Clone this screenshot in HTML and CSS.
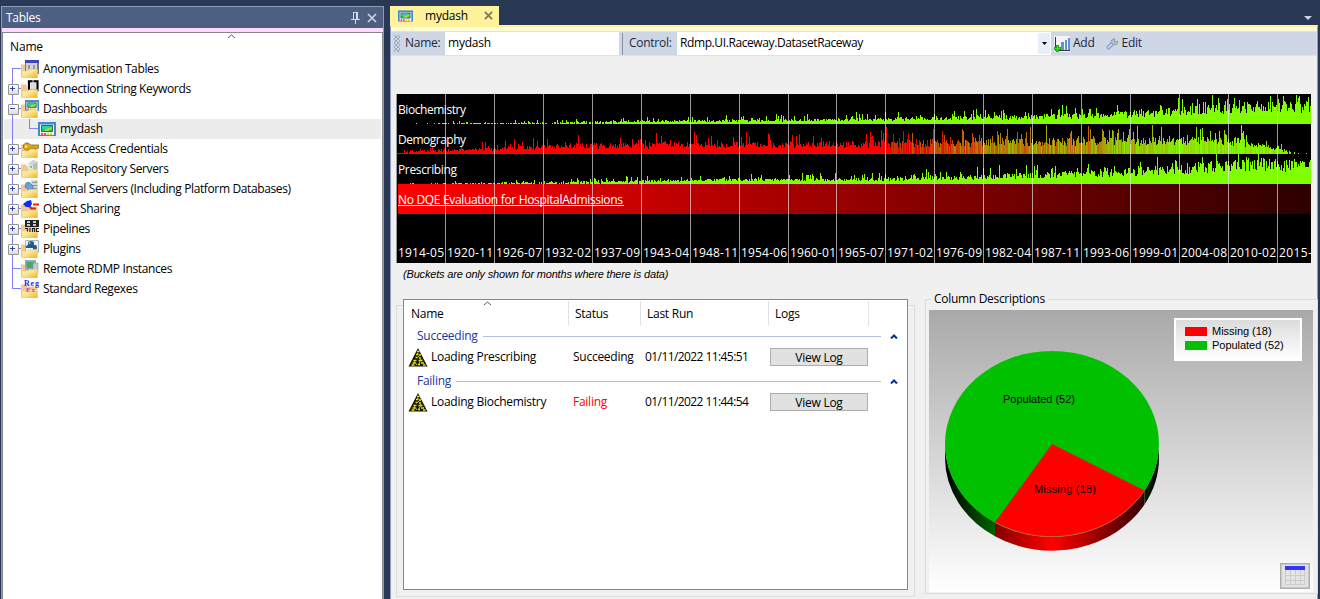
FILE: index.html
```
<!DOCTYPE html>
<html lang="en">
<head>
<meta charset="utf-8">
<title>mydash</title>
<link rel="stylesheet" href="styles.css">
</head>
<body>
<svg class="defs" width="0" height="0">
  <defs>
    <linearGradient id="gold" x1="0" y1="0" x2="1" y2="1"><stop offset="0" stop-color="#fff3bd"/><stop offset=".45" stop-color="#fde290"/><stop offset="1" stop-color="#ecb41c"/></linearGradient>
    <symbol id="back" viewBox="0 0 18 18"><path d="M0 4.500h5l1 2h10v11H0z" fill="#f0c890"/></symbol>
    <symbol id="front" viewBox="0 0 18 18"><path d="M1 18V11h5.500l2-1.500H16.500V18z" fill="url(#gold)" stroke="#f0c868" stroke-width=".5"/></symbol>
    <symbol id="screen" viewBox="0 0 18 14"><path d="M0 0h18v14H0z" fill="#4488cc"/><path d="M2 2.500h14V13H2z" fill="#eef5fb"/><path d="M3.500 3.500h11v6h-11z" fill="#1fc433" stroke="#4d5a66"/><path d="M4 4h9L9 7H4z" fill="#2ad3a6"/><path d="M5 9l5-3 4-1v2l-4 2z" fill="#8ee43c"/><path d="M3 11h2v2H3zM6 11h2v2H6z" fill="#f44"/><path d="M9 11h2v2H9zM12 11h2v2h-2z" fill="#f6c326"/></symbol>
    <symbol id="hazard" viewBox="0 0 20 20"><path d="M10 1L19.500 19.500H.5z" fill="#171708"/><path d="M9 4.500h2.500M8 7.500h2M11 8h2M7.500 10.500h2M11 11h2M5.500 13.500h3M10.500 13.500h4M4.500 16h3M13 16h3M3.500 18h3M10 17.500h2M15 18h2.500" stroke="#efe313" stroke-width="1.500"/><path d="M9 6l3 2-3 3M6 14l3 4M13 12l-2 5" stroke="#d2c81a" fill="none"/></symbol>
    <symbol id="server" viewBox="0 0 14 14"><path d="M3 4l5-4 5 2v8l-5 4-5-2z" fill="#b8bab9"/><path d="M3 4l5 1v9l-5-2z" fill="#e8e9e8"/><path d="M3 4l5-4 5 2-5 3z" fill="#d6d7d5"/><path d="M5 7l2 .5" stroke="#43bd4a" stroke-width="1.500"/></symbol>
  </defs>
</svg>
<div class="app">
  <aside class="dock">
    <header class="dock-title"><span>Tables</span>
      <svg class="pin" width="9" height="12" viewBox="0 0 9 12"><path d="M2.500 0v7M2 .5h4M5.500 0v7M6.500 0v7M0 7.500h9M4.500 8v4" fill="none" stroke="#d5dae6"/></svg>
      <svg class="close" width="10" height="10" viewBox="0 0 10 10"><path d="M1 1l8 8M9 1L1 9" stroke="#ced4e3" stroke-width="1.700"/></svg>
    </header>
    <div class="tree-box">
      <svg class="sort" width="9" height="5" viewBox="0 0 9 5"><path d="M1 4l3.500-3L8 4" fill="none" stroke="#555"/></svg>
      <div class="tree-head">Name</div>
      <ul class="tree">
        <li class="leaf first"><i class="joint"></i><svg class="ico" viewBox="0 0 18 18"><use href="#back"/><path d="M4 0h14v14H4z" fill="#77787c"/><path d="M4 0h14v3H4z" fill="#3b46c4"/><path d="M5 3h11v8H5z" fill="#d4d4d6"/><path d="M7 5h2v4H7zM12 5h2v4h-2z" fill="#98989c"/><use href="#front"/></svg><span>Anonymisation Tables</span></li>
        <li><i class="joint plus"></i><svg class="ico" viewBox="0 0 18 18"><use href="#back"/><path d="M6 0h12v11H6z" fill="#ddd"/><path d="M11.500 1.200H8v9h3.500M12.500 1.200H16.500v9h-4" fill="none" stroke="#000" stroke-width="2"/><use href="#front"/></svg><span>Connection String Keywords</span></li>
        <li><i class="joint minus"></i><svg class="ico" viewBox="0 0 18 18"><use href="#back"/><use href="#screen" x="4" y="0" width="14" height="11"/><use href="#front"/></svg><span>Dashboards</span></li>
        <li class="child"><i class="joint"></i><svg class="ico wide" viewBox="0 0 18 14"><use href="#screen" width="18" height="14"/></svg><span>mydash</span></li>
        <li><i class="joint plus"></i><svg class="ico" viewBox="0 0 18 18"><use href="#back"/><use href="#front"/><path d="M2.500 5l2-2h3l2 2H18v2.500l-1.500 1.500-1-1-1.500 1-1.500-1H9.500l-2 2h-3l-2-2z" fill="#dba914" stroke="#8a6606" stroke-width=".8"/><path d="M4 5.500h2v2H4z" fill="#fff1b0"/></svg><span>Data Access Credentials</span></li>
        <li><i class="joint plus"></i><svg class="ico" viewBox="0 0 18 18"><use href="#back"/><use href="#server" x="4" y="0" width="14" height="13"/><use href="#front"/></svg><span>Data Repository Servers</span></li>
        <li><i class="joint plus"></i><svg class="ico" viewBox="0 0 18 18"><use href="#back"/><path d="M10 0h7v11h-7z" fill="#d5d7d8"/><path d="M11 2.500h5M11 5.500h5M11 8.500h5" stroke="#8f9496"/><path d="M15 1v2" stroke="#43bd4a"/><path d="M5 3l3-1 4 4v4H8L4 7z" fill="#6a9fd8" stroke="#4376ad" stroke-width=".7"/><use href="#front"/></svg><span>External Servers (Including Platform Databases)</span></li>
        <li><i class="joint plus"></i><svg class="ico" viewBox="0 0 18 18"><use href="#back"/><use href="#front"/><path d="M12 4.500h6M9 8.500h6M8 6l3 3" stroke="#f51d0c" stroke-width="2.200"/><path d="M2 4l4-3 4-1 1 4-2 3-4 0z" fill="#0c2fef"/></svg><span>Object Sharing</span></li>
        <li><i class="joint plus"></i><svg class="ico" viewBox="0 0 18 18"><use href="#back"/><use href="#front"/><path d="M4 0h14v7H4z" fill="#222"/><path d="M6 1h3v5H6zM12 1h3v5h-3z" fill="#ccc"/><path d="M6 3.500h3M12 3.500h3" stroke="#222"/><path d="M4 8.500h2.500v3M9 8v4M11.500 12V8.500h2V12M18 8.500h-2.500v3H18" fill="none" stroke="#252525" stroke-width="1.200"/></svg><span>Pipelines</span></li>
        <li><i class="joint plus"></i><svg class="ico" viewBox="0 0 18 18"><use href="#back"/><path d="M4.500.5h13v12h-13z" fill="#eef3f6" stroke="#a5b8c4"/><path d="M7 5V3q0-2 3-2t3 2v2h2q2 2 0 6h-3V8H5q-1-2 2-3z" fill="#245c86"/><path d="M8 3h1.500" stroke="#fff"/><use href="#front"/></svg><span>Plugins</span></li>
        <li class="leaf"><i class="joint"></i><svg class="ico" viewBox="0 0 18 18"><use href="#back"/><path d="M4 0h11v10H4z" fill="#86aed4"/><path d="M5.500 2h8v6h-8z" fill="#4fa65c"/><path d="M12 3h5v10h-5z" fill="#c3c8ca" stroke="#8f979a" stroke-width=".6"/><use href="#front"/></svg><span>Remote RDMP Instances</span></li>
        <li class="leaf last"><i class="joint"></i><svg class="ico" viewBox="0 0 18 18"><use href="#back"/><use href="#front"/><text x="3" y="6" class="reg" textLength="15">Reg</text><text x="5" y="12" class="reg ex" textLength="9">Ex</text></svg><span>Standard Regexes</span></li>
      </ul>
    </div>
  </aside>

  <main class="doc">
    <div class="tabs">
      <div class="tab"><svg width="15" height="12" viewBox="0 0 18 14"><use href="#screen" width="18" height="14"/></svg><span>mydash</span>
        <svg class="tab-x" width="9" height="9" viewBox="0 0 10 10"><path d="M1 1l8 8M9 1L1 9" stroke="#82754b" stroke-width="1.900"/></svg></div>
      <svg class="tab-menu" width="8" height="4" viewBox="0 0 8 4"><path d="M0 0h8L4 4z" fill="#ced4e3"/></svg>
    </div>
    <div class="page">
      <div class="strip">
        <i class="grip"></i><label class="l-name">Name:</label><div class="box name">mydash</div>
        <i class="sep"></i><label class="l-ctl">Control:</label>
        <div class="box combo"><span>Rdmp.UI.Raceway.DatasetRaceway</span><i class="drop"><svg width="5" height="3" viewBox="0 0 5 3"><path d="M0 0h5L2.500 3z"/></svg></i></div>
        <svg class="s-ico" width="16" height="16" viewBox="0 0 16 16"><path d="M0 0h16v16H0z" fill="#f3f5fa"/><path d="M1.500 1v13.500H16" fill="none" stroke="#333"/><path d="M7 6h3v8H7zM11 4h2v10h-2zM14 2h2v12h-2z" fill="#5d95cc"/><path d="M3.500 9v7M0 12.500h7" stroke="#1fae13" stroke-width="3"/><path d="M3.500 10v5M1 12.500h5" stroke="#37e82b"/></svg><span class="s-txt">Add</span>
        <svg class="s-ico edit" width="12" height="12" viewBox="0 0 12 12"><path d="M2.500 9.500L6 6" stroke="#7b9ddc" stroke-width="4" stroke-linecap="round"/><path d="M2.500 9.500l3-3" stroke="#bed0f4" stroke-width="2" stroke-linecap="round"/><path d="M5.500 5a2.800 2.800 0 0 1 3.500-4L8 3l1 1 2.500-1a2.800 2.800 0 0 1-4 3.500z" fill="#b9bcc2" stroke="#8d929c" stroke-width=".8"/></svg><span class="s-txt">Edit</span>
      </div>
      <section class="race">
        <svg id="raceway" width="915" height="169" viewBox="0 0 915 169">
          <defs><linearGradient id="fade"><stop offset="0" stop-color="#f00"/><stop offset="1" stop-color="#2d0000"/></linearGradient></defs>
          <rect width="915" height="169"/><rect x="2" y="90" width="913" height="30" fill="url(#fade)"/>
          <g id="bars" shape-rendering="crispEdges"></g><g id="grid"></g>
          <g class="race-label">
            <text x="2" y="20" textLength="68">Biochemistry</text><text x="2" y="50" textLength="68">Demography</text><text x="2" y="80" textLength="59">Prescribing</text>
            <text x="2" y="110" textLength="225">No DQE Evaluation for HospitalAdmissions</text><path d="M2 111.500h226" stroke="#fff"/>
          </g>
        </svg>
        <p class="note">(Buckets are only shown for months where there is data)</p>
      </section>
      <div class="lower">
        <section class="loads"><div class="load-list">
          <div class="lhead"><svg class="lsort" width="9" height="5" viewBox="0 0 9 5"><path d="M1 4l3.500-3L8 4" fill="none" stroke="#555"/></svg><span>Name</span><span>Status</span><span>Last Run</span><span>Logs</span></div>
          <div class="group"><span>Succeeding</span><hr><svg width="8" height="5" viewBox="0 0 8 5"><path d="M1 4.500L4 1.500l3 3" fill="none" stroke="#003399" stroke-width="2"/></svg></div>
          <div class="lrow"><svg class="hz" width="20" height="20"><use href="#hazard"/></svg><span class="n">Loading Prescribing</span><span class="st">Succeeding</span><span class="dt">01/11/2022 11:45:51</span><button>View Log</button></div>
          <div class="group"><span>Failing</span><hr><svg width="8" height="5" viewBox="0 0 8 5"><path d="M1 4.500L4 1.500l3 3" fill="none" stroke="#003399" stroke-width="2"/></svg></div>
          <div class="lrow"><svg class="hz" width="20" height="20"><use href="#hazard"/></svg><span class="n">Loading Biochemistry</span><span class="st fail">Failing</span><span class="dt">01/11/2022 11:44:54</span><button>View Log</button></div>
        </div></section>
        <section class="cols">
          <h2>Column Descriptions</h2>
          <div class="plot">
            <svg class="pie" width="240" height="282" viewBox="0 0 240 282">
              <defs>
                <linearGradient id="sideR" gradientUnits="userSpaceOnUse" x1="16" x2="230"><stop offset="0" stop-color="#000"/><stop offset=".23" stop-color="#800000"/><stop offset=".5" stop-color="#f00"/><stop offset=".92" stop-color="#380000"/><stop offset="1" stop-color="#000"/></linearGradient>
                <linearGradient id="sideG" gradientUnits="userSpaceOnUse" x1="16" x2="230"><stop offset="0" stop-color="#000"/><stop offset=".23" stop-color="#006200"/><stop offset=".5" stop-color="#00c000"/><stop offset=".92" stop-color="#002800"/><stop offset="1" stop-color="#000"/></linearGradient>
              </defs>
              <path d="M16 134A107 93 0 0 0 66 212.300V226.300A107 93 0 0 1 16 148z" fill="url(#sideG)"/>
              <path d="M230 134A107 93 0 0 1 215.500 180.500V194.500A107 93 0 0 0 230 148z" fill="url(#sideG)"/>
              <path d="M66 212.300A107 93 0 0 0 215.500 180.500V194.500A107 93 0 0 1 66 226.300z" fill="url(#sideR)"/>
              <ellipse cx="123" cy="134" rx="107" ry="93" fill="#00c000"/>
              <path d="M123 134L66 212.300A107 93 0 0 0 215.500 180.500z" fill="#f00"/>
              <path d="M66 212.300A107 93 0 0 0 215.500 180.500" fill="none" stroke="#f66" stroke-width=".5"/>
              <text x="74" y="93" textLength="72">Populated (52)</text><text x="105" y="183" textLength="62">Missing (18)</text>
            </svg>
            <div class="legend"><div><i class="red"></i><span>Missing (18)</span></div><div><i class="green"></i><span>Populated (52)</span></div></div>
            <button class="grid-btn"><svg width="20" height="20" viewBox="0 0 20 20"><path d="M0 4h20v15H0z" fill="#e4e4e4"/><path d="M.5 4v15M5.500 4v15M10.500 4v15M15.500 4v15M19.500 4v15M0 9.500h20M0 14.500h20M0 18.500h20" stroke="#ccc"/><path d="M0 0h20v4H0z" fill="#3434f0"/></svg></button>
          </div>
        </section>
      </div>
    </div>
  </main>
</div>
<script src="raceway.js"></script>
</body>
</html>
```
FILE: styles.css
```
* { box-sizing: border-box; }
body { margin: 0; width: 1320px; height: 599px; overflow: hidden; background: #293955; color: #000; font: 12px/20px "Open Sans", "Noto Sans", sans-serif; letter-spacing: -.26px; }
span, label, text { white-space: nowrap; }
.defs { position: absolute; }
.app { display: flex; height: 599px; padding: 6px 2px 0 1px; gap: 6px; }
.dock { width: 383px; border: 1px solid #8e9bbc; border-bottom: 0; background: #ffd9fa; display: flex; flex-direction: column; }
.dock-title { display: flex; align-items: center; height: 21px; background: #4d6082; color: #fff; padding: 0 6px 0 4px; }
.dock-title span { flex: 1; padding-top: 1px; }
.pin { margin-right: 7px; }
.tree-box { margin-top: 4px; flex: 1; background: #fff; border: 1px solid #828790; border-width: 1px 1px 0; padding-top: 2px; position: relative; }
.sort { position: absolute; left: 224px; top: 1px; }
.tree-head { height: 24px; padding: 2px 0 0 7px; letter-spacing: -.15px; }
.tree { list-style: none; margin: 0 1px; padding: 0; letter-spacing: -.37px; }
.tree li { position: relative; display: flex; height: 20px; align-items: center; }
.tree li::before { content: ""; position: absolute; left: 8px; top: 0; bottom: 0; width: 1px; background: #8080ff; }
.tree li.first::before { top: 9px; }
.tree li.last::before { bottom: 10px; }
.joint { width: 17px; height: 20px; flex: none; position: relative; background: linear-gradient(#8080ff, #8080ff) 8px 9px / 9px 1px no-repeat; }
.plus::before, .minus::before { content: ""; position: absolute; left: 4px; top: 5px; width: 9px; height: 9px; border: 1px solid #919191; border-radius: 1px; background: linear-gradient(#3445a0, #3445a0) 1px 3px / 5px 1px no-repeat, linear-gradient(#fff, #ddd); }
.plus::before { background: linear-gradient(#3445a0, #3445a0) 1px 3px / 5px 1px no-repeat, linear-gradient(#3445a0, #3445a0) 3px 1px / 1px 5px no-repeat, linear-gradient(#fff, #ddd); }
.ico { width: 18px; height: 18px; flex: none; margin-right: 4px; }
.ico.wide { height: 14px; }
.tree .child { background: #ececec; letter-spacing: -.2px; }
.child .joint { width: 34px; background: linear-gradient(#8080ff, #8080ff) 25px 9px / 9px 1px no-repeat, linear-gradient(#8080ff, #8080ff) 25px 0 / 1px 9px no-repeat; }
.reg { font: bold 8px "Liberation Serif", serif; fill: #3522ee; letter-spacing: 0; }
.reg.ex { fill: #f012d8; font-size: 7px; }
.doc { width: 928px; display: flex; flex-direction: column; }
.tabs { height: 19px; display: flex; justify-content: space-between; }
.tab { width: 109px; background: #fff29d; display: flex; align-items: center; padding: 0 6px 0 8px; letter-spacing: -.2px; }
.tab span { margin-left: 12px; flex: 1; padding-top: 1px; }
.tab-menu { margin: 10px 6px 0 0; }
.page { flex: 1; background: #f0f0f0; border-top: 2px solid #fff29d; border-right: 1px solid #8e9bbc; border-left: 1px solid #8e9bbc; box-shadow: inset 0 4px #fffbd5; padding-top: 4px; display: flex; flex-direction: column; }
.strip { height: 25px; border: 1px solid #dce1ec; background: #cfd6e5; display: flex; align-items: center; color: #1b293e; }
.grip { width: 6px; height: 17px; margin: 0 5px 0 2px; background: radial-gradient(circle, #8390a8 .6px, transparent .9px) 0 0 / 4px 4px, radial-gradient(circle, #8390a8 .6px, transparent .9px) 2px 2px / 4px 4px; }
.l-name { width: 40px; }
.box { background: #fff; color: #000; height: 23px; line-height: 22px; padding-left: 3px; letter-spacing: -.2px; }
.box.name { width: 174px; }
.sep { width: 1px; height: 22px; background: #8591a8; margin: 0 6px 0 3px; }
.l-ctl { width: 48px; }
.combo { width: 374px; display: flex; justify-content: space-between; letter-spacing: -.4px; }
.drop { width: 12px; background: #e7eefc; display: flex; align-items: center; justify-content: center; margin: 1px; }
.s-ico { margin-left: 3px; }
.s-txt { margin-left: 3px; }
.strip label, .s-txt { padding-bottom: 1px; }
.s-ico.edit { margin-left: 11px; }
.s-ico.edit + .s-txt { margin-left: 4px; }
.race { padding: 38px 0 0 5px; height: 241px; }
.race svg { display: block; }
.race-label text { fill: #fff; font-size: 12px; letter-spacing: 0; }
.axis { fill: #fff; font-size: 12px; letter-spacing: 0; }
.note { margin: 1px 0 0 7px; font: italic 11px/20px "Liberation Sans", Arial, sans-serif; letter-spacing: -.18px; }
.lower { flex: 1; display: flex; align-items: flex-start; padding-left: 5px; }
.loads { width: 520px; height: 292px; margin-top: 8px; border: 1px solid #dcdcdc; padding: 0 6px; }
.load-list { width: 505px; height: 291px; margin-top: -7px; background: #fff; border: 1px solid #828790; }
.lhead { display: grid; grid-template-columns: 165px 72px 128px 100px; height: 25px; position: relative; margin-top: 1px; }
.lhead span { border-right: 1px solid #e2e2e2; padding: 3px 0 0 6px; }
.lhead span:nth-of-type(1) { padding-left: 7px; }
.lsort { position: absolute; left: 79px; top: 0; }
.group { display: flex; align-items: center; height: 20px; padding: 0 9px 0 13px; color: #1937a0; }
.group hr { flex: 1; border: 0; border-top: 1px solid #b0c0df; margin: 0 9px 0 5px; }
.group span { padding-bottom: 1px; }
.lrow { height: 25px; display: grid; grid-template-columns: 27px 142px 72px 125px 98px; align-items: center; padding-bottom: 3px; }
.hz { margin-left: 4px; }
.fail { color: #f00; }
.dt { letter-spacing: -.58px; }
button { font: inherit; letter-spacing: inherit; color: #000; background: #e1e1e1; border: 1px solid #adadad; padding: 0; height: 18px; line-height: 18px; overflow: hidden; }
.cols { width: 393px; height: 295px; margin: 2px 0 0 10px; border: 1px solid #dcdcdc; padding: 0 3px; flex: none; }
.cols h2 { font: inherit; line-height: 20px; margin: -11px 0 0 2px; padding: 0 3px; width: 117px; background: #f0f0f0; white-space: nowrap; letter-spacing: -.3px; }
.plot { width: 384px; height: 282px; margin-top: 1px; background: linear-gradient(#a9a9a9, #fff); display: flex; position: relative; }
.pie text { font: 11px "Liberation Sans", Arial, sans-serif; letter-spacing: 0; }
.legend { width: 128px; height: 43px; margin: 8px 0 0 5px; border: 2px solid #fff; background: linear-gradient(#dcdcdc, #fff); padding: 4px 9px; font: 11px/14px "Liberation Sans", Arial, sans-serif; letter-spacing: -.03px; }
.legend div { display: flex; align-items: center; gap: 5px; height: 14px; }
.legend i { width: 22px; height: 9px; }
.red { background: #f00; }
.green { background: #00c000; }
.grid-btn { position: absolute; right: 3px; bottom: 3px; width: 30px; height: 26px; display: flex; align-items: center; justify-content: center; box-shadow: inset 0 0 0 1px #c8c8c8; }
```
FILE: raceway.js
```
(function () {
  var NS = "http://www.w3.org/2000/svg";
  var seed = 20221101;
  function rnd() { seed = (seed * 1664525 + 1013904223) % 4294967296; return seed / 4294967296; }
  // Typical bar height along the timeline, as [x, height] control points
  var health = [[0, 0], [30, .3], [60, .7], [150, 1.5], [240, 3], [330, 3.5], [450, 4.5], [540, 6], [620, 7], [720, 9.5], [800, 14], [850, 18], [880, 20], [914, 18]];
  var scripts = [[0, 0], [25, .2], [80, .9], [150, 1.8], [250, 3], [330, 4], [480, 4.5], [600, 7.5], [700, 11], [780, 15], [850, 21], [914, 19]];
  var people = [[0, .6], [12, 2.5], [60, 4], [100, 5], [160, 8], [300, 9.5], [480, 10], [600, 12], [720, 13.5], [840, 13], [872, 7], [888, 3.5], [904, .6], [914, 0]];
  function level(p, x) {
    for (var i = 1; i < p.length; i++) if (x <= p[i][0]) {
      return p[i - 1][1] + (p[i][1] - p[i - 1][1]) * (x - p[i - 1][0]) / (p[i][0] - p[i - 1][0]);
    }
    return 0;
  }
  // Completeness of the month: red where empty, through orange, to lime
  var complete = [[495, 0], [520, .15], [570, .4], [610, .55], [680, .55], [740, .8], [790, .92], [914, .95]];
  function shade(x) {
    if (x < 495) return "#f00";
    var k = Math.min(1, Math.max(0, level(complete, x) + (rnd() - .5) * (x < 740 ? .45 : .2)));
    return "rgb(" + Math.round(230 - 100 * k) + "," + Math.round(250 * k) + ",0)";
  }
  var bars = document.getElementById("bars");
  function bar(x, base, h, fill) {
    var b = document.createElementNS(NS, "rect");
    b.setAttribute("x", x); b.setAttribute("y", base - h);
    b.setAttribute("width", 1); b.setAttribute("height", h);
    b.setAttribute("fill", fill);
    bars.appendChild(b);
  }
  function draw(p, base, colour, peak) {
    for (var x = 1; x < 915; x++) {
      var v = level(p, x), r = rnd();
      var h = Math.round(v * (.6 + r * .7) + (rnd() > .78 ? rnd() * Math.min(peak, v * 1.1 + 1.5) : 0));
      if (v < 3 && rnd() > v / 3.5 + .1) h = v > 0.1 && rnd() > .75 ? 1 : 0;
      h = Math.min(30, h);
      if (h >= 1) bar(x, base, h, colour(x));
    }
  }
  function lime() { return "#7fff00"; }
  draw(health, 30, lime, 11); draw(people, 60, shade, 15); draw(scripts, 90, lime, 10);
  bar(490, 60, 27, "#f00");
  var labels = ["1914-05", "1920-11", "1926-07", "1932-02", "1937-09", "1943-04", "1948-11", "1954-06", "1960-01", "1965-07", "1971-02", "1976-09", "1982-04", "1987-11", "1993-06", "1999-01", "2004-08", "2010-02", "2015-"];
  var grid = document.getElementById("grid");
  labels.forEach(function (s, i) {
    var x = i * 49 - (i > 8 ? 1 : 0);
    var l = document.createElementNS(NS, "rect");
    l.setAttribute("x", x); l.setAttribute("width", 1); l.setAttribute("height", 169);
    l.setAttribute("fill", "rgba(255,255,255,.6)"); grid.appendChild(l);
    var t = document.createElementNS(NS, "text");
    t.setAttribute("x", x + 2); t.setAttribute("y", 163); t.setAttribute("class", "axis");
    t.setAttribute("textLength", s.length === 7 ? 46 : 33); t.textContent = s; grid.appendChild(t);
  });
})();
```
